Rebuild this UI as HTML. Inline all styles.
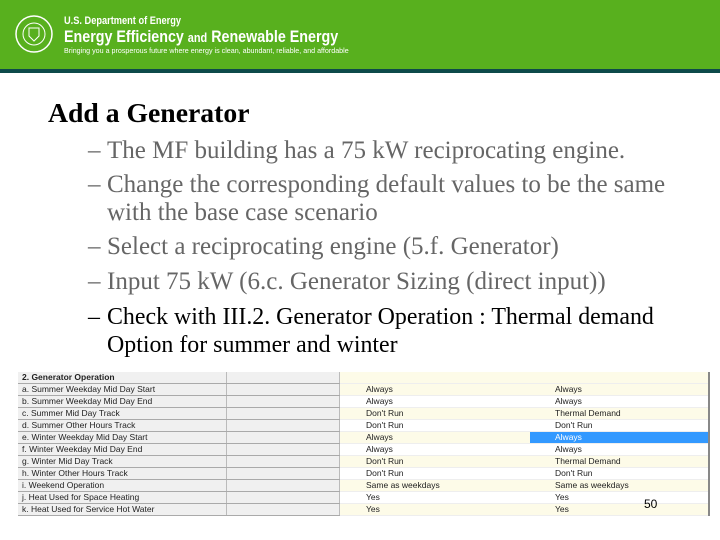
<!DOCTYPE html>
<html><head><meta charset="utf-8"><style>
body{margin:0;width:720px;height:540px;position:relative;background:#fff;overflow:hidden;font-family:"Liberation Serif",serif}
.hdr{position:absolute;left:0;top:0;width:720px;height:69px;background:#58b01e}
.str{position:absolute;left:0;top:69px;width:720px;height:4px;background:#0d4a4a}
.t{position:absolute;color:#fff;font-family:"Liberation Sans",sans-serif;white-space:nowrap;transform-origin:0 0}
h1{position:absolute;left:48px;top:97px;margin:0;font-size:27.7px;font-weight:bold}
.b{position:absolute;left:88px;font-size:25px;color:#666;white-space:nowrap}
.b span{position:absolute;left:19px}
table{position:absolute;left:18px;top:372px;border-collapse:collapse;font-family:"Liberation Sans",sans-serif;font-size:8.5px;color:#222}
td{height:11px;padding:0 0 0 4px;border-bottom:1px solid #aaa;line-height:11px;white-space:nowrap}
td.l{width:204px;background:#f0f0f0;border-right:1px solid #bbb}
td.e{width:108px;background:#f0f0f0;border-right:1px solid #bbb}
td.c{width:164px;padding-left:26px;border-bottom:1px solid #eee}
td.d{width:153px;padding-left:25px;border-bottom:1px solid #eee;border-right:2px solid #888}
tr:nth-child(even) td.c,tr:nth-child(even) td.d,tr:first-child td.c,tr:first-child td.d{background:#fdfbe8}
td.sel{background:#3399ff!important;color:#fff}
</style></head><body>
<div class="hdr"></div><div class="str"></div>
<svg style="position:absolute;left:14px;top:14px" width="40" height="40"><circle cx="20" cy="20" r="18" fill="none" stroke="#fff" stroke-width="1.5"/><circle cx="20" cy="20" r="11" fill="none" stroke="#fff" stroke-width="1"/><path d="M15 14h10v8l-5 5-5-5z" fill="none" stroke="#fff"/></svg>
<div class="t" style="left:64px;top:15px;font-size:11px;font-weight:bold;transform:scaleX(0.84)">U.S. Department of Energy</div>
<div class="t" style="left:64px;top:27px;font-size:17px;font-weight:bold;transform:scaleX(0.84)">Energy Efficiency <span style="font-size:13px">and</span> Renewable Energy</div>
<div class="t" style="left:64px;top:46px;font-size:7.5px;transform:scaleX(0.95)">Bringing you a prosperous future where energy is clean, abundant, reliable, and affordable</div>
<h1>Add a Generator</h1>
<div class="b" style="top:137px">–<span>The MF building has a 75 kW reciprocating engine.</span></div>
<div class="b" style="top:171px">–<span>Change the corresponding default values to be the same</span></div>
<div class="b" style="top:199px"><span>with the base case scenario</span></div>
<div class="b" style="top:233px">–<span>Select a reciprocating engine (5.f. Generator)</span></div>
<div class="b" style="top:268px">–<span>Input 75 kW (6.c. Generator Sizing (direct input))</span></div>
<div class="b" style="top:304px;color:#000;font-size:23.9px">–<span>Check with III.2. Generator Operation : Thermal demand</span></div>
<div class="b" style="top:332px;color:#000;font-size:23.9px"><span>Option for summer and winter</span></div>
<table>
<tr><td class="l"><b>2. Generator Operation</b></td><td class="e"></td><td class="c"></td><td class="d"></td></tr>
<tr><td class="l">a. Summer Weekday Mid Day Start</td><td class="e"></td><td class="c">Always</td><td class="d">Always</td></tr>
<tr><td class="l">b. Summer Weekday Mid Day End</td><td class="e"></td><td class="c">Always</td><td class="d">Always</td></tr>
<tr><td class="l">c. Summer Mid Day Track</td><td class="e"></td><td class="c">Don't Run</td><td class="d">Thermal Demand</td></tr>
<tr><td class="l">d. Summer Other Hours Track</td><td class="e"></td><td class="c">Don't Run</td><td class="d">Don't Run</td></tr>
<tr><td class="l">e. Winter Weekday Mid Day Start</td><td class="e"></td><td class="c">Always</td><td class="d sel">Always</td></tr>
<tr><td class="l">f. Winter Weekday Mid Day End</td><td class="e"></td><td class="c">Always</td><td class="d">Always</td></tr>
<tr><td class="l">g. Winter Mid Day Track</td><td class="e"></td><td class="c">Don't Run</td><td class="d">Thermal Demand</td></tr>
<tr><td class="l">h. Winter Other Hours Track</td><td class="e"></td><td class="c">Don't Run</td><td class="d">Don't Run</td></tr>
<tr><td class="l">i. Weekend Operation</td><td class="e"></td><td class="c">Same as weekdays</td><td class="d">Same as weekdays</td></tr>
<tr><td class="l">j. Heat Used for Space Heating</td><td class="e"></td><td class="c">Yes</td><td class="d">Yes</td></tr>
<tr><td class="l">k. Heat Used for Service Hot Water</td><td class="e"></td><td class="c">Yes</td><td class="d">Yes</td></tr>
</table>
<div style="position:absolute;left:644px;top:497px;font-family:'Liberation Sans',sans-serif;font-size:12px">50</div>
</body></html>
